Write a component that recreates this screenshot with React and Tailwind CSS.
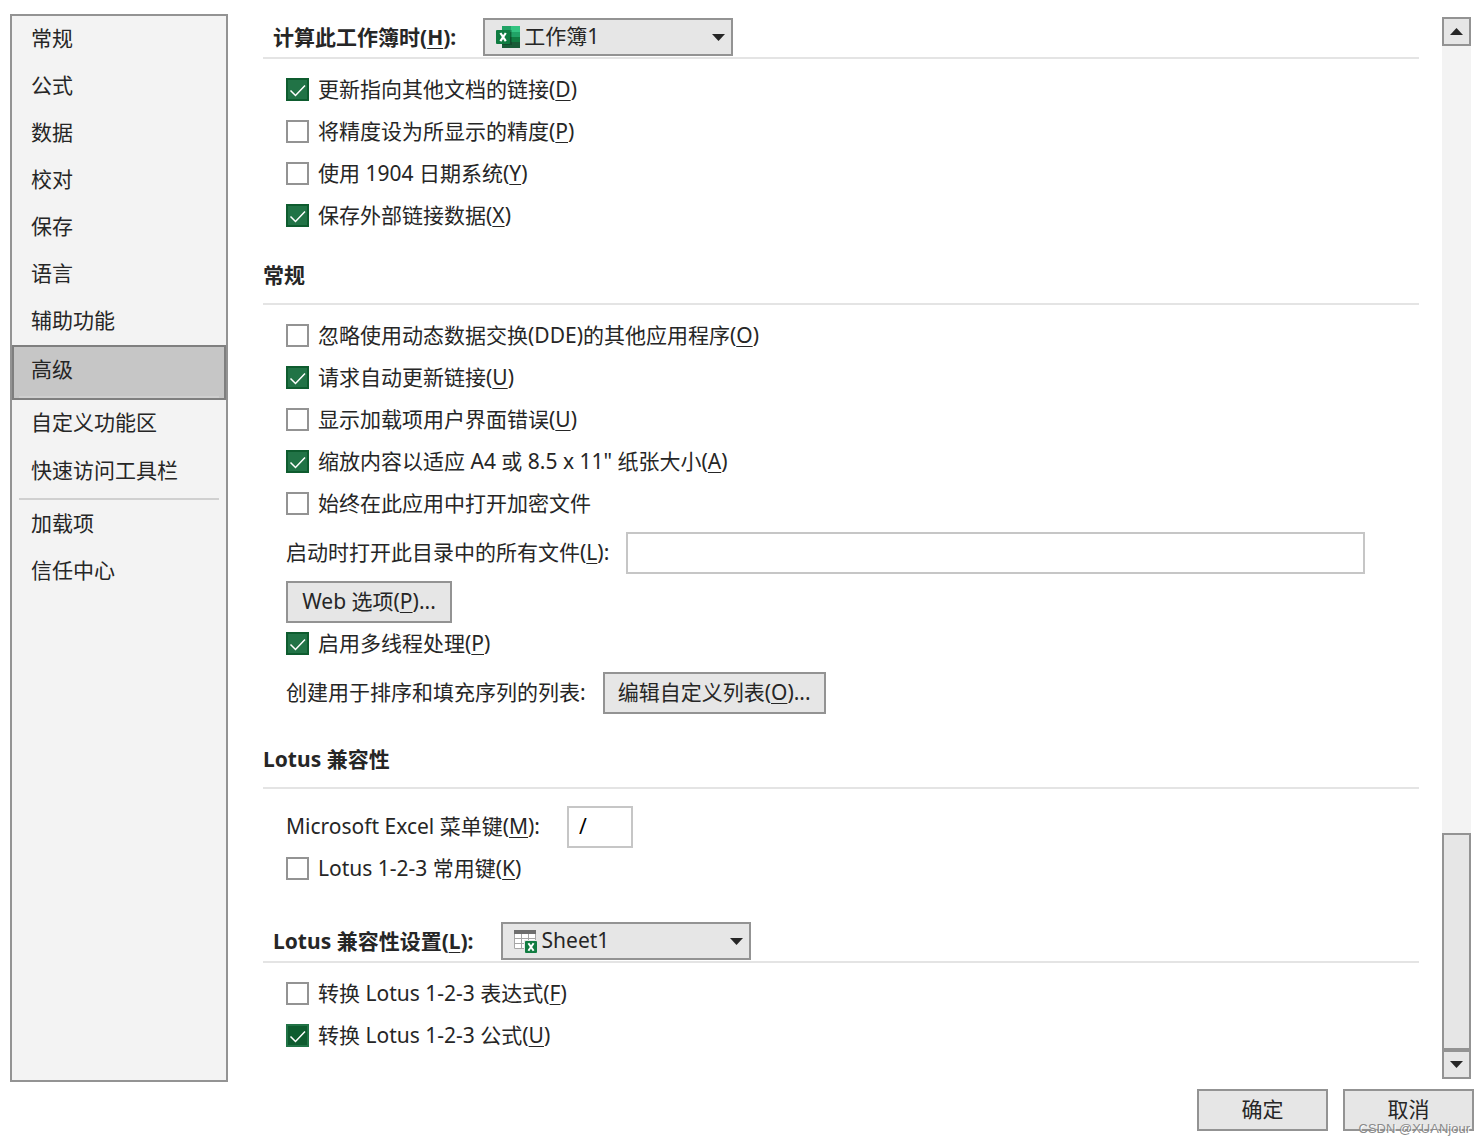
import clsx from 'clsx'

const categories = [
    { label: '常规' },
    { label: '公式' },
    { label: '数据' },
    { label: '校对' },
    { label: '保存' },
    { label: '语言' },
    { label: '辅助功能' },
    { label: '高级', active: true },
    { label: '自定义功能区' },
    { label: '快速访问工具栏', last: true },
    { label: '加载项' },
    { label: '信任中心' },
]

const Key = ({ children }) => (
    <u className="decoration-1 underline-offset-[3px] [text-decoration-skip-ink:none]">{children}</u>
)

const Arrow = ({ up, className }) => (
    <svg width="13" height="7" viewBox="0 0 13 7" className={className} aria-hidden="true">
        <path d={up ? 'M0 7 L6.5 0 L13 7 Z' : 'M0 0 L6.5 7 L13 0 Z'} fill="#262626" />
    </svg>
)

const WorkbookIcon = () => (
    <svg width="24" height="22" viewBox="0 0 24 22" aria-hidden="true">
        <path d="M6 0h9v6H6z" fill="#21a366" />
        <path d="M15 0h9v6h-9z" fill="#33c481" />
        <path d="M6 6h9v5H6z" fill="#107c41" />
        <path d="M15 6h9v5h-9z" fill="#21a366" />
        <path d="M6 11h9v5H6z" fill="#185c37" />
        <path d="M15 11h9v5h-9z" fill="#107c41" />
        <path d="M6 16h18v6H6z" fill="#185c37" />
        <path d="M6 4h10v15H6z" fill="#000" opacity="0.18" />
        <rect y="4" width="14" height="14" rx="1" fill="#107c41" />
        <path d="M4.4 7 L9.8 15.2 M9.8 7 L4.4 15.2" stroke="#fff" strokeWidth="2.2" />
    </svg>
)

const SheetIcon = () => (
    <svg width="24" height="23" viewBox="0 0 24 23" aria-hidden="true">
        <path d="M0 0h22v19H0z" fill="#fff" />
        <path d="M0.5 4v14.5H12M21.5 4v7M0 8.5h22M0 13.5h12M7.5 4v15M14.5 4v7" stroke="#a6a6a6" fill="none" />
        <path d="M0 0h22v4H0z" fill="#6e6e6e" />
        <path d="M10 10h14v13H10z" fill="#e6e6e6" />
        <rect x="11" y="11" width="12" height="12" rx="1" fill="#107c41" />
        <path d="M14.4 13.2 L19.6 20.8 M19.6 13.2 L14.4 20.8" stroke="#fff" strokeWidth="2" />
    </svg>
)

const Check = ({ children, checked, focused }) => (
    <label className="flex h-[23px] w-fit items-center gap-[9px] whitespace-nowrap">
        <span className="relative h-[23px] w-[23px] shrink-0">
            <input
                type="checkbox"
                defaultChecked={checked}
                className={clsx(
                    'peer block h-full w-full appearance-none border-2 border-[#939393] bg-white',
                    focused
                        ? 'checked:border-[#217346] checked:bg-[#0e5c2f]'
                        : 'checked:border-[#0e5c2f] checked:bg-[#217346]'
                )}
            />
            <svg
                viewBox="0 0 23 23"
                className="pointer-events-none absolute inset-0 hidden h-full w-full peer-checked:block"
                aria-hidden="true"
            >
                <path d="M4.5 12.5 L9.5 17.5 L19 7.5" fill="none" stroke="#fff" strokeWidth="1.5" />
            </svg>
        </span>
        <span className="pb-[2px]">{children}</span>
    </label>
)

const Select = ({ id, icon, value }) => (
    <span className="relative block h-[38px] w-[250px]">
        <select
            id={id}
            defaultValue={value}
            className="h-full w-full appearance-none border-2 border-[#939393] bg-[#e6e6e6] pb-[2px] pl-[39px]"
        >
            <option>{value}</option>
        </select>
        <span className="pointer-events-none absolute top-2 left-[13px]">{icon}</span>
        <Arrow className="pointer-events-none absolute top-4 right-2" />
    </span>
)

const Button = ({ children, className }) => (
    <button
        type="button"
        className={clsx('h-[42px] border-2 border-[#939393] bg-[#e6e6e6] pb-[2px] whitespace-nowrap', className)}
    >
        {children}
    </button>
)

const Heading = ({ children }) => (
    <h2 className="border-b-2 border-[#e4e4e4] pb-3 leading-8 font-bold">{children}</h2>
)

const SelectHeading = ({ id, label, icon, value }) => (
    <div className="flex items-center gap-[27px] border-b-2 border-[#e4e4e4] pb-px pl-[10px]">
        <label htmlFor={id} className="font-bold">{label}</label>
        <Select id={id} icon={icon} value={value} />
    </div>
)

const Sidebar = () => (
    <nav className="w-[218px] shrink-0 border-2 border-[#939393] bg-[#f3f3f3]">
        {categories.map(({ label, active, last }) => (
            <div key={label}>
                <button
                    type="button"
                    className={clsx(
                        'relative flex w-full items-center text-left',
                        active && 'h-[55px] border-2 border-[#7f7f7f] bg-[#c6c6c6] pb-[7px] pl-[17px]',
                        last && 'h-[49px] pb-[3px] pl-[19px]',
                        !active && !last && 'h-[47px] pb-[3px] pl-[19px]'
                    )}
                >
                    {label}
                    {active && <span className="absolute inset-x-[5px] bottom-0 h-[2px] bg-[#cfcfcf]" />}
                </button>
                {last && <hr className="mx-[7px] mt-[2px] mb-px border-t-2 border-[#d0d0d0]" />}
            </div>
        ))}
    </nav>
)

const ScrollBar = () => (
    <div className="my-[3px] flex w-[29px] shrink-0 flex-col bg-[#f3f3f3]">
        <button
            type="button"
            aria-label="向上滚动"
            className="flex h-[29px] items-center justify-center border-2 border-[#939393] bg-[#e6e6e6]"
        >
            <Arrow up />
        </button>
        <div className="flex flex-1 flex-col justify-end">
            <div className="h-[217px] border-2 border-[#939393] bg-[#e6e6e6]" />
        </div>
        <button
            type="button"
            aria-label="向下滚动"
            className="flex h-[29px] items-center justify-center border-2 border-[#939393] bg-[#e6e6e6]"
        >
            <Arrow />
        </button>
    </div>
)

const App = () => (
    <div className="relative flex min-h-screen flex-col bg-white pt-[14px] pb-[14px] pl-[10px] font-['Noto_Sans','Noto_Sans_CJK_SC',sans-serif] text-[21px] leading-6 text-[#262626]">
        <div className="flex flex-1 pr-[13px]">
            <Sidebar />

            <main className="mr-[23px] ml-[35px] flex-1 pt-1">
                <SelectHeading
                    id="workbook"
                    label={<>计算此工作簿时(<Key>H</Key>):</>}
                    icon={<WorkbookIcon />}
                    value="工作簿1"
                />
                <div className="mb-8 flex flex-col gap-[19px] pt-[19px] pl-[23px]">
                    <Check checked>更新指向其他文档的链接(<Key>D</Key>)</Check>
                    <Check>将精度设为所显示的精度(<Key>P</Key>)</Check>
                    <Check>使用 1904 日期系统(<Key>Y</Key>)</Check>
                    <Check checked>保存外部链接数据(<Key>X</Key>)</Check>
                </div>

                <Heading>常规</Heading>
                <div className="mb-[29px] pt-[19px] pl-[23px]">
                    <div className="flex flex-col gap-[19px]">
                        <Check>忽略使用动态数据交换(DDE)的其他应用程序(<Key>O</Key>)</Check>
                        <Check checked>请求自动更新链接(<Key>U</Key>)</Check>
                        <Check>显示加载项用户界面错误(<Key>U</Key>)</Check>
                        <Check checked>缩放内容以适应 A4 或 8.5 x 11" 纸张大小(<Key>A</Key>)</Check>
                        <Check>始终在此应用中打开加密文件</Check>
                    </div>
                    <div className="mt-[17px] mr-[54px] flex items-center gap-[17px]">
                        <label htmlFor="startup" className="pb-[2px] whitespace-nowrap">
                            启动时打开此目录中的所有文件(<Key>L</Key>):
                        </label>
                        <input id="startup" type="text" className="h-[42px] min-w-0 flex-1 border-2 border-[#c6c6c6] px-[10px]" />
                    </div>
                    <Button className="mt-[7px] mb-[9px] block w-[166px]">Web 选项(<Key>P</Key>)...</Button>
                    <Check checked>启用多线程处理(<Key>P</Key>)</Check>
                    <div className="mt-[17px] flex items-center gap-[17px]">
                        <span className="pb-[2px]">创建用于排序和填充序列的列表:</span>
                        <Button className="w-[223px]">编辑自定义列表(<Key>O</Key>)...</Button>
                    </div>
                </div>

                <Heading>Lotus 兼容性</Heading>
                <div className="mb-[42px] pt-[17px] pl-[23px]">
                    <div className="mb-[9px] flex items-center gap-[17px]">
                        <label htmlFor="menukey" className="w-[264px] pb-[2px] whitespace-nowrap">
                            Microsoft Excel 菜单键(<Key>M</Key>):
                        </label>
                        <input
                            id="menukey"
                            type="text"
                            defaultValue="/"
                            className="h-[42px] w-[66px] border-2 border-[#c6c6c6] px-[10px] pb-[2px] text-black"
                        />
                    </div>
                    <Check>Lotus 1-2-3 常用键(<Key>K</Key>)</Check>
                </div>

                <SelectHeading
                    id="sheet"
                    label={<>Lotus 兼容性设置(<Key>L</Key>):</>}
                    icon={<SheetIcon />}
                    value="Sheet1"
                />
                <div className="flex flex-col gap-[19px] pt-[19px] pl-[23px]">
                    <Check>转换 Lotus 1-2-3 表达式(<Key>F</Key>)</Check>
                    <Check checked focused>转换 Lotus 1-2-3 公式(<Key>U</Key>)</Check>
                </div>
            </main>

            <ScrollBar />
        </div>

        <footer className="mt-[7px] flex justify-end gap-[15px] pr-[10px]">
            <Button className="w-[131px]">确定</Button>
            <Button className="w-[131px]">取消</Button>
        </footer>
        <span className="absolute right-[14px] bottom-2 font-['Liberation_Sans',sans-serif] text-[13px] leading-4 text-[#8a8a8a] [text-shadow:1px_1px_0_#fff]">
            CSDN @XUANjour
        </span>
    </div>
)

export default App
